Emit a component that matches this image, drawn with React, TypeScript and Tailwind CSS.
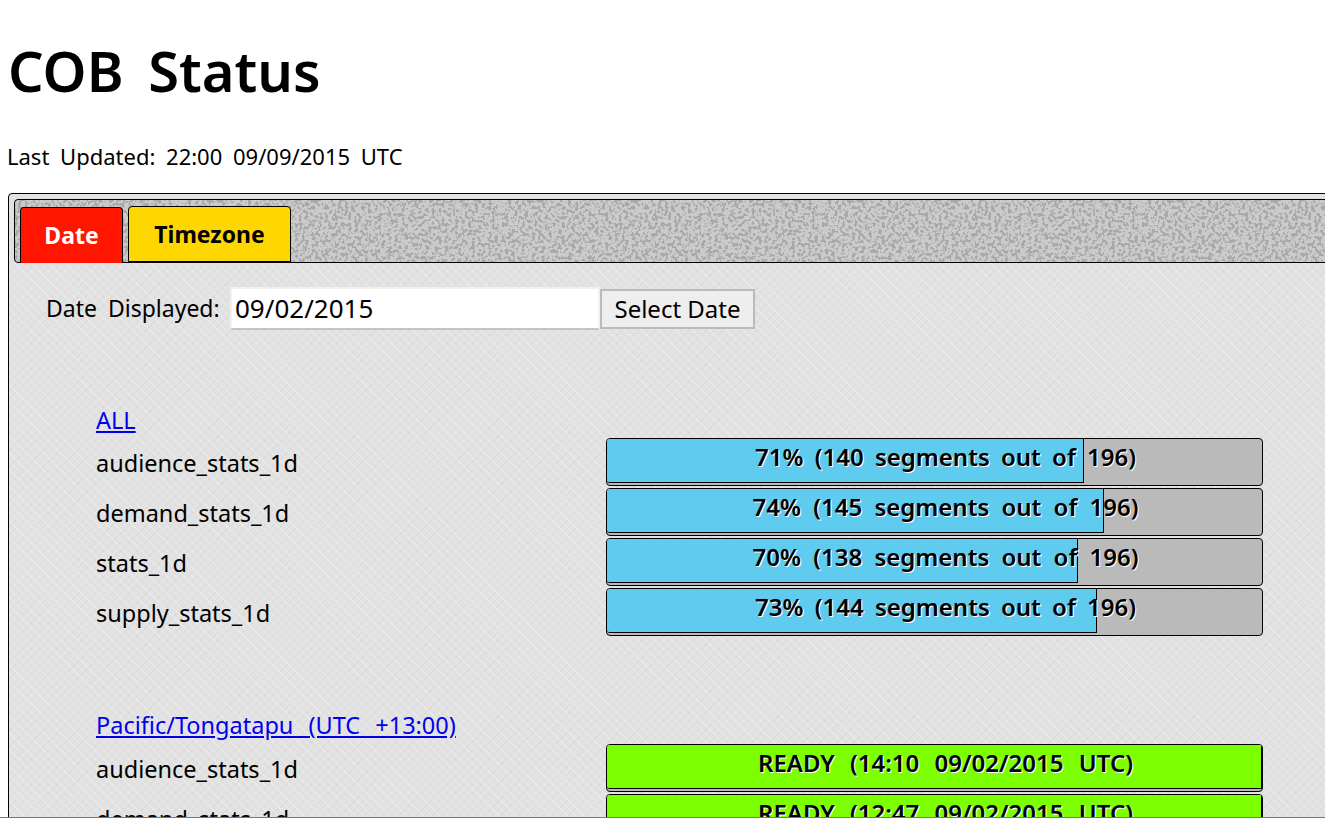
const statusFont = "font-['Noto_Sans','DejaVu_Sans',sans-serif]";

// speckled grey behind the tabs
const tabBg =
  'bg-[#cbcbcb] bg-[url("data:image/svg+xml,%3Csvg%20xmlns=%27http://www.w3.org/2000/svg%27%20width=%27320%27%20height=%27320%27%3E%3Cfilter%20id=%27n%27%20color-interpolation-filters=%27sRGB%27%3E%3CfeTurbulence%20type=%27fractalNoise%27%20baseFrequency=%270.3%27%20numOctaves=%272%27%20stitchTiles=%27stitch%27/%3E%3CfeColorMatrix%20values=%270%200%200%200%200.66%200%200%200%200%200.66%200%200%200%200%200.66%200%200%200%2012%20-6%27/%3E%3C/filter%3E%3Crect%20width=%27320%27%20height=%27320%27%20filter=%27url(%23n)%27/%3E%3C/svg%3E")]';
const panelBg =
  'bg-[#e2e2e2] bg-[repeating-linear-gradient(45deg,#e9e9e9_0px,#e9e9e9_1px,transparent_1px,transparent_6px),repeating-linear-gradient(-45deg,#dbdbdb_0px,#dbdbdb_1px,transparent_1px,transparent_6px)]';

interface BarRow {
  name: string;
  text: string;
  fill: number;
  color: string;
  spacing: string;
}

const allRows: BarRow[] = [
  { name: 'audience_stats_1d', text: '71% (140 segments out of 196)', fill: 477, color: 'bg-[#5fcbef]', spacing: '[word-spacing:5px]' },
  { name: 'demand_stats_1d', text: '74% (145 segments out of 196)', fill: 497, color: 'bg-[#5fcbef]', spacing: '[word-spacing:6px]' },
  { name: 'stats_1d', text: '70% (138 segments out of 196)', fill: 471, color: 'bg-[#5fcbef]', spacing: '[word-spacing:6px]' },
  { name: 'supply_stats_1d', text: '73% (144 segments out of 196)', fill: 490, color: 'bg-[#5fcbef]', spacing: '[word-spacing:5px]' },
];

const tongaRows: BarRow[] = [
  { name: 'audience_stats_1d', text: 'READY (14:10 09/02/2015 UTC)', fill: 655, color: 'bg-[#7cff00]', spacing: '[word-spacing:9px]' },
  { name: 'demand_stats_1d', text: 'READY (12:47 09/02/2015 UTC)', fill: 655, color: 'bg-[#7cff00]', spacing: '[word-spacing:9px]' },
];

const Row = ({ row }: { row: BarRow }) => (
  <div className="flex h-[50px] items-center">
    <div className="w-[510px] pt-[6px] text-[23.5px] text-black">{row.name}</div>
    <div className="relative mt-[2px] h-[48px] w-[657px] overflow-hidden rounded-[4px] border border-black bg-[#bababa]">
      <div
        className={`h-[44px] rounded-bl-[3px] border-r border-b border-black ${row.color}`}
        style={{ width: row.fill }}
      />
      <div className={`absolute inset-0 flex items-center justify-center pb-[11px] pl-[22px] text-[24px] font-semibold whitespace-nowrap text-black [text-shadow:1px_1px_0_#fff] ${row.spacing}`}>
        {row.text}
      </div>
    </div>
  </div>
);

const App = () => {
  return (
    <div className={`h-[818px] w-[1325px] overflow-hidden border-b border-[#777] bg-white [word-spacing:5px] ${statusFont}`}>
      <h1 className="pt-[32px] pl-[8px] text-[56px] leading-[76px] font-semibold text-black [word-spacing:10px]">COB Status</h1>
      <p className="pt-[34px] pl-[7px] text-[22px] leading-[29px] text-black">Last Updated: 22:00 09/09/2015 UTC</p>

      {/* tab container */}
      <div className="mt-[22px] ml-[8px] h-[700px] w-[1400px] rounded-[4px] border border-black bg-[#e2e2e2] p-[5px]">
        <div className={`flex h-[64px] items-end gap-[5px] rounded-[4px] border border-black px-[5px] ${tabBg}`}>
          <div className="mb-[-1px] flex h-[56px] w-[103px] items-center justify-center rounded-t-[4px] border border-b-0 border-black bg-[#ff1500] text-[23px] font-bold text-white">
            Date
          </div>
          <div className="flex h-[56px] w-[163px] items-center justify-center rounded-t-[4px] border border-black bg-[#ffd700] text-[23px] font-bold text-black">
            Timezone
          </div>
        </div>

        {/* panel */}
        <div className={`-mx-[5px] -mb-[5px] h-[640px] ${panelBg}`}>
          <div className="flex items-center pt-[24px] pl-[37px]">
            <span className="w-[184px] text-[23px] text-black">Date Displayed:</span>
            <div className="flex h-[43px] w-[370px] items-center border-2 border-[#f0f0f0] border-b-[#c4c4c4] bg-white pl-[3px] text-[26px] text-black">
              09/02/2015
            </div>
            <button className="h-[40px] w-[155px] border-2 border-[#bbbbbb] bg-[#eeeeee] text-[24px] text-black">
              Select Date
            </button>
          </div>

          <div className="pt-[75px] pl-[87px]">
            <a href="#" className="text-[23.5px] leading-[30px] text-[#0000ee] underline">ALL</a>
            <div className="pt-[1px]">
              {allRows.map((row) => (
                <Row key={row.name} row={row} />
              ))}
            </div>

            <div className="pt-[74px]">
              <a href="#" className="text-[23.5px] leading-[30px] text-[#0000ee] underline [word-spacing:9px]">Pacific/Tongatapu (UTC +13:00)</a>
            </div>
            <div className="pt-[2px]">
              {tongaRows.map((row) => (
                <Row key={row.name} row={row} />
              ))}
            </div>
          </div>
        </div>
      </div>
    </div>
  );
};

export default App;
